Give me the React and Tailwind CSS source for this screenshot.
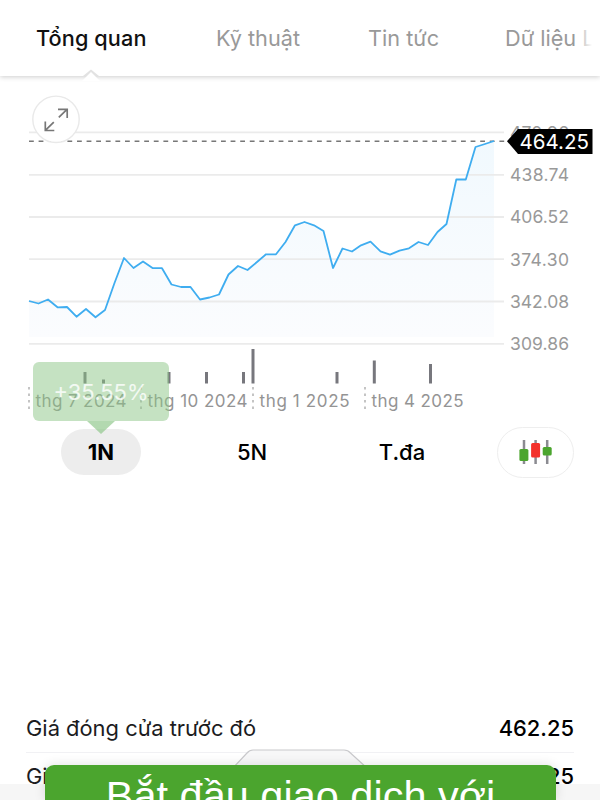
const tabs = [
  { label: 'Tổng quan', box: 'w-[110px] ml-9', active: true },
  { label: 'Kỹ thuật', box: 'w-[84px] ml-[70px]' },
  { label: 'Tin tức', box: 'w-[70px] ml-[68px]' },
  { label: 'Dữ liệu Lịch sử', box: 'w-[95px] ml-[67px]' },
];

const points = [
  [29, 301], [38.5, 303.5], [48, 299.5], [57.5, 307.3], [67, 307], [76.5, 316.7],
  [86, 309], [95.5, 317.3], [105, 310], [114.5, 283], [124, 258], [133.5, 268],
  [143, 261.5], [152.5, 268], [162, 268.2], [171.5, 284.5], [181, 287], [190.5, 287],
  [200, 299.5], [209.5, 297.5], [219, 294.5], [228.5, 274.5], [238, 266], [247.5, 270],
  [257, 262], [266, 254.3], [276, 254.3], [285.5, 242], [295, 225.3], [304.5, 222],
  [314, 225.3], [323.5, 231], [333, 268], [342.5, 248.5], [352, 251.5], [361, 245.3],
  [370.5, 241.7], [380.5, 251.3], [390, 254.7], [399.5, 250.7], [409, 248.3],
  [418.5, 242], [428, 245], [437.5, 232], [446.5, 224], [456.3, 179.5],
  [465.8, 179.5], [475.5, 147], [485, 144], [494, 141],
];

const gridLines = [
  { y: 132.3, label: '470.96' },
  { y: 174.8, label: '438.74' },
  { y: 217, label: '406.52' },
  { y: 259.2, label: '374.30' },
  { y: 301.5, label: '342.08' },
  { y: 343.8, label: '309.86' },
];

const volumes = [
  [85, 372], [103.5, 379.5], [169, 372], [206.5, 372], [243.5, 372],
  [253, 349], [337, 372], [374.3, 360.5], [430.5, 364],
];

const months = [
  { x: 29, label: 'thg 7 2024', width: 91 },
  { x: 141, label: 'thg 10 2024', width: 100 },
  { x: 253, label: 'thg 1 2025', width: 90 },
  { x: 365, label: 'thg 4 2025', width: 92 },
];

const line = points.map((p) => p.join(',')).join(' ');

const TabBar = () => (
  <nav className="relative h-[76px] bg-white shadow-[0_1px_5px_rgba(0,0,0,0.2)]">
    <div className="flex h-[76px] items-center overflow-hidden text-[21.7px] leading-8 whitespace-nowrap">
      {tabs.map((tab) => (
        <div
          key={tab.label}
          className={`${tab.box} shrink-0 overflow-visible ${
            tab.active ? 'font-medium text-[#111] tracking-[0.1px]' : 'text-[#999]'
          }`}
        >
          {tab.label}
        </div>
      ))}
    </div>
    <div className="absolute top-0 right-0 h-[74px] w-5 bg-gradient-to-r from-white/30 to-white to-60%" />
    <svg className="absolute top-[68px] left-[81px]" width="20" height="13" viewBox="0 0 20 13">
      <path d="M2 8L10 1.5 18 8z" fill="#e2e2e2" />
      <path d="M1 13L10 4l9 9z" fill="#fff" />
    </svg>
  </nav>
);

const PriceChart = () => (
  <svg width="600" height="344" viewBox="0 76 600 344" className="block shrink-0">
    <defs>
      <linearGradient id="area" x1="0" y1="0" x2="0" y2="1">
        <stop offset="0" stopColor="#f1f9fe" />
        <stop offset="1" stopColor="#fbfcfe" />
      </linearGradient>
    </defs>
    <polygon points={`29,337 ${line} 494,337`} fill="url(#area)" />
    {gridLines.map((g) => (
      <g key={g.label}>
        <line x1="29" x2="504" y1={g.y} y2={g.y} stroke="#ebebeb" strokeWidth="1.8" />
        <text x="510" y={g.y + 6.4} textLength="59" fontSize="17.5" fill="#999">
          {g.label}
        </text>
      </g>
    ))}
    <line x1="29" x2="508" y1="141.2" y2="141.2" stroke="#777" strokeWidth="1.5" strokeDasharray="4.8 4.8" />
    <polyline points={line} fill="none" stroke="#3fadf0" strokeWidth="1.8" strokeLinejoin="round" />

    <path d="M507 141.2l11-12.2h74.5v25H518z" fill="#000" />
    <text x="519.5" y="148.8" textLength="69.5" fontSize="20.5" fill="#fff">464.25</text>

    {volumes.map(([x, y]) => (
      <line key={x} x1={x} x2={x} y1={y} y2="383.5" stroke="#77777d" strokeWidth="3" />
    ))}
    {months.map((m) => (
      <g key={m.label}>
        <line x1={m.x} x2={m.x} y1="387" y2="410" stroke="#c4c4c4" strokeWidth="2" strokeDasharray="2.5 4" />
        <text x={m.x + 6.5} y="407" textLength={m.width} fontSize="17" fill="#949494">
          {m.label}
        </text>
      </g>
    ))}

    <circle cx="56" cy="119.3" r="23.2" fill="#fff" stroke="#e9e9e9" strokeWidth="1.4" />
    <g fill="none" stroke="#777" strokeWidth="1.7">
      <path d="M58 109.3h9.2v8.7M58.8 117.3l8.2-8" />
      <path d="M45.3 121.5v9h9M45.6 130.2l8.2-8" />
    </g>
  </svg>
);

const CandleIcon = () => (
  <svg width="34" height="26" viewBox="0 0 34 26">
    <path d="M5 1v24M16.6 1v24M28.2 1v24" stroke="#8b8b91" strokeWidth="2.5" />
    <rect x="0.4" y="10" width="9" height="12" rx="1.5" fill="#4ba52e" />
    <rect x="12.1" y="4" width="9" height="14.5" rx="1.5" fill="#f3312b" />
    <rect x="23.7" y="8" width="9" height="8.5" rx="1.5" fill="#4ba52e" />
  </svg>
);

const Periods = () => (
  <div className="flex h-[50px] items-center text-[22px] font-medium text-black">
    <div className="relative ml-[61px] flex h-[46px] w-20 items-center justify-center rounded-full bg-[#ededed] font-bold">
      1N
      <div className="absolute -top-[67px] -left-7 flex h-[59px] w-[136px] items-center justify-center rounded-md bg-[#8bc586]/50 pt-0.5 text-[22px] font-normal text-white/80">
        +35.55%
        <svg className="absolute top-[59px] left-[54px]" width="28" height="13" viewBox="0 0 28 13">
          <path d="M0 0h28L14 13z" fill="#8bc586" fillOpacity=".65" />
        </svg>
      </div>
    </div>
    <div className="ml-[71px] flex w-20 justify-center">5N</div>
    <div className="ml-[70px] flex w-20 justify-center">T.đa</div>
    <div className="ml-[55px] flex h-[51px] w-[77px] items-center justify-center rounded-full border-[1.5px] border-[#eee]">
      <CandleIcon />
    </div>
  </div>
);

const StatRow = ({ label, value }) => (
  <div className="mx-[26px] flex h-12 shrink-0 items-center justify-between border-b border-[#f1f1f4] text-[21.9px] text-[#1c1c1e]">
    <span>{label}</span>
    <span className="font-medium text-black">{value}</span>
  </div>
);

const BottomBanner = () => (
  <div className="absolute inset-x-0 bottom-0 h-[51px]">
    <div className="absolute inset-x-0 bottom-0 h-4 bg-[#f4f4f4]/80" />
    <svg className="absolute top-0 left-[230px]" width="140" height="20" viewBox="0 0 140 20">
      <path d="M2 20L17 4q2.5-3 6-3h91q4 0 6.5 3L138 20" fill="#f7f7f8" stroke="#c9c9cc" strokeWidth="1.2" />
    </svg>
    <div className="absolute top-4 left-[45px] h-[35px] w-[511px] overflow-hidden rounded-t-[9px] bg-[#4ba52e] pt-[6px] text-center font-['Liberation_Sans',sans-serif] text-[41.5px] leading-[50px] whitespace-nowrap text-white shadow-[0_0_12px_rgba(0,0,0,0.12)]">
      Bắt đầu giao dịch với
    </div>
  </div>
);

export default function App() {
  return (
    <main className="relative flex h-[800px] w-[600px] flex-col overflow-hidden bg-white font-['Inter',sans-serif]">
      <div className="relative z-10">
        <TabBar />
      </div>
      <PriceChart />
      <div className="mt-[7px]">
        <Periods />
      </div>
      <section className="mt-[228px] flex flex-col">
        <StatRow label="Giá đóng cửa trước đó" value="462.25" />
        <StatRow label="Giá mở cửa" value="464.25" />
      </section>
      <BottomBanner />
    </main>
  );
}
